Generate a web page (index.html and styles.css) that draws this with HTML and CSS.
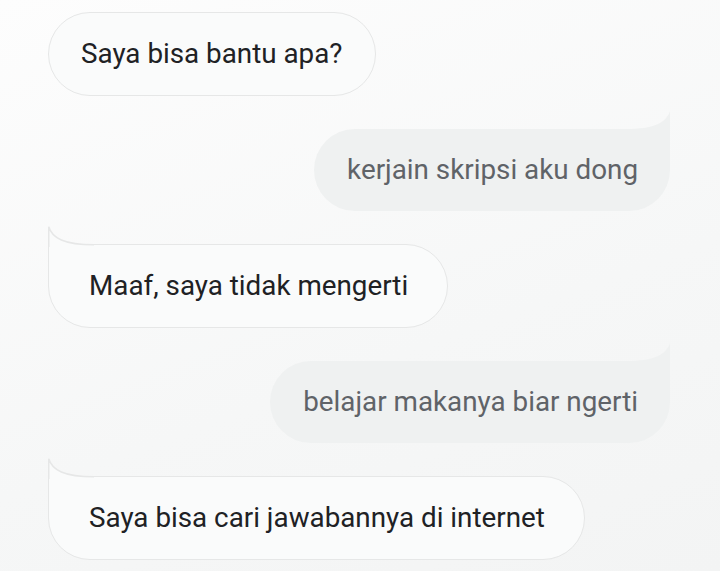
FILE: index.html
```html
<!DOCTYPE html>
<html lang="id">
<head>
    <meta charset="UTF-8">
    <title>Assistant</title>
    <link rel="stylesheet" href="styles.css">
</head>
<body>
    <div class="chat">
        <div class="bubble bot first">Saya bisa bantu apa?</div>

        <div class="bubble user">
            kerjain skripsi aku dong
            <svg class="tail tail-right" width="44" height="20" viewBox="0 0 44 20">
                <path d="M44,0 C40,12 28,18 0,18 L0,20 L44,20 Z" />
            </svg>
        </div>

        <div class="bubble bot">
            Maaf, saya tidak mengerti
            <svg class="tail tail-left" width="46" height="21" viewBox="0 0 46 21">
                <path class="fill" d="M0.75,0.75 C4,12 16,18.75 46,18.75 L46,21 L0.75,21 Z" />
                <path class="line" d="M0.75,21 L0.75,0.75 C4,12 16,18.75 46,18.75" />
            </svg>
        </div>

        <div class="bubble user">
            belajar makanya biar ngerti
            <svg class="tail tail-right" width="44" height="20" viewBox="0 0 44 20">
                <path d="M44,0 C40,12 28,18 0,18 L0,20 L44,20 Z" />
            </svg>
        </div>

        <div class="bubble bot">
            Saya bisa cari jawabannya di internet
            <svg class="tail tail-left" width="46" height="21" viewBox="0 0 46 21">
                <path class="fill" d="M0.75,0.75 C4,12 16,18.75 46,18.75 L46,21 L0.75,21 Z" />
                <path class="line" d="M0.75,21 L0.75,0.75 C4,12 16,18.75 46,18.75" />
            </svg>
        </div>
    </div>
</body>
</html>
```

FILE: styles.css
```css
body {
    margin: 0;
    height: 571px;
    overflow: hidden;
    font-family: Roboto, "Noto Sans", sans-serif;
    background: linear-gradient(160deg, #fdfdfd 0%, #f6f7f7 60%, #f3f4f4 100%);
}

.chat {
    display: flex;
    flex-direction: column;
    align-items: flex-start;
    gap: 33px;
    padding: 12px 50px 0 48px;
}

.bubble {
    position: relative;
    font-size: 27.8px;
    line-height: 32px;
    white-space: nowrap;
    padding: 25px 39px 25px 40px;
    border-radius: 42px;
}

/* assistant bubbles */
.bot {
    background-color: #fafbfb;
    border: 1.5px solid #e6e7e7;
    color: #202124;
    border-top-left-radius: 0;
}

.bot.first {
    padding: 25px 32px;
    border-radius: 43px;
}

/* user bubbles */
.user {
    align-self: flex-end;
    background-color: #eff1f1;
    color: #5f6368;
    padding: 25px 32px 25px 33px;
    border-top-right-radius: 0;
}

.tail {
    position: absolute;
    display: block;
}

.tail-right {
    right: 0;
    top: -18px;
}

.tail-right path {
    fill: #eff1f1;
}

.tail-left {
    left: -1.5px;
    top: -19.5px;
}

.tail-left .fill {
    fill: #fafbfb;
}

.tail-left .line {
    fill: none;
    stroke: #e6e7e7;
    stroke-width: 1.5;
}
```
